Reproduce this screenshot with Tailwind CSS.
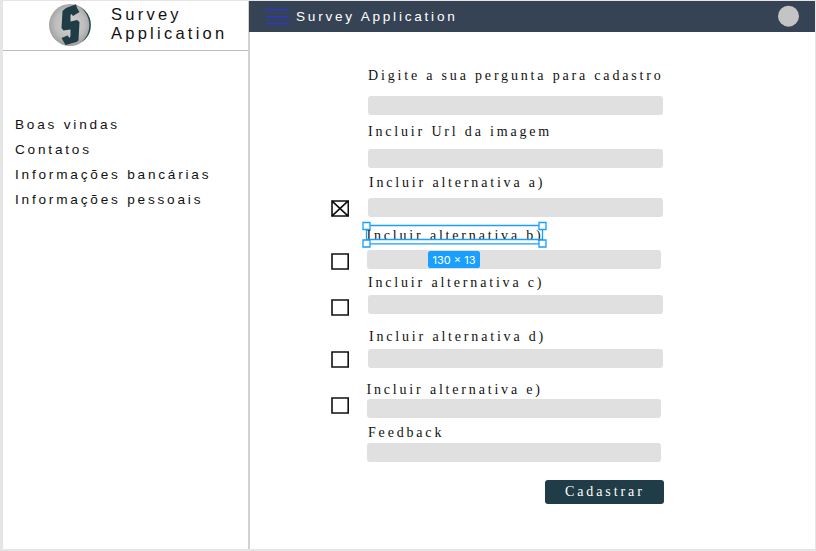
<!DOCTYPE html>
<html lang="pt-BR">
<head>
<meta charset="utf-8">
<title>Survey Application</title>
<script src="https://cdn.jsdelivr.net/npm/@tailwindcss/browser@4"></script>
</head>
<body class="w-[816px] h-[551px] overflow-hidden bg-[#e5e5e5] pl-[3px] pt-px pr-px pb-[2px] text-[#111] font-['Liberation_Sans',Arial,sans-serif]">
<div class="flex h-[548px] w-[812px] bg-white">
  <aside class="w-[247px] h-full shrink-0 border-r-2 border-[#d2d2d2]">
    <div class="flex h-[50px] border-b border-[#bdbdbd] pl-[46px] pt-[3px]">
      <svg class="w-[42px] h-[42px] shrink-0" viewBox="0 0 42 42">
        <defs><radialGradient id="disc" cx=".5" cy=".48" r=".55"><stop offset="0" stop-color="#d4d4d4"/><stop offset=".65" stop-color="#bcbcbc"/><stop offset="1" stop-color="#999"/></radialGradient></defs>
        <circle cx="21" cy="21" r="21" fill="url(#disc)"/>
        <path d="M31 3A20.5 20.5 0 0 1 32 38.5Q41 31 40.300 20Q39.500 9 31 3Z" fill="#254751"/>
        <path d="M13.500 7L17 4L27 .3L28 4L30.500 8L24 12L22.500 10L21.500 11V17.500L28 16L30.500 18L29.500 36.500L27.500 38L16.500 41L12.500 34L18.500 31.500L20.500 34L21.500 32V25.500L14.500 26.500L12.500 24Z" fill="#1f3c47"/>
      </svg>
      <h1 class="ml-[20px] mt-px text-[16.5px] leading-[19px] tracking-[3.25px]">Survey<br>Application</h1>
    </div>
    <nav class="mt-[65.5px] ml-[12px] text-[13.6px] leading-[16px] tracking-[2.8px] whitespace-nowrap">
      <div>Boas vindas</div>
      <div class="mt-[9.5px]">Contatos</div>
      <div class="mt-[8.5px]">Informações bancárias</div>
      <div class="mt-[9.5px]">Informações pessoais</div>
    </nav>
  </aside>
  <main class="w-[566px] -ml-px shrink-0">
    <header class="flex h-[30.5px] items-center bg-[#364354] pl-[17px] pr-[16px] text-white">
      <svg class="w-[23px] h-[18px] translate-y-[0.75px]" viewBox="0 0 23 18" stroke="#2b36d3" stroke-width="1.5"><path d="M0 2H23M0 9H23M0 16H23"/></svg>
      <span class="ml-[7px] pt-px text-[13.6px] leading-[16px] tracking-[2.76px]">Survey Application</span>
      <span class="ml-auto size-[21px] -translate-y-[0.3px] rounded-full bg-[#c4c4c4]"></span>
    </header>
    <form class="relative flex flex-col pt-[35.5px] pl-[82px] font-['Liberation_Serif',serif] text-[14px] leading-[18px] tracking-[2.82px] whitespace-nowrap">
      <div class="h-4 ml-[37px]">Digite a sua pergunta para cadastro</div>
      <div class="mt-[13px] ml-[37px] h-[19px] w-[294.5px] rounded-[3px] bg-[#e0e0e0]"></div>
      <div class="mt-[7.5px] h-4 ml-[37px]">Incluir Url da imagem</div>
      <div class="mt-[10.5px] ml-[37px] h-[19px] w-[294.5px] rounded-[3px] bg-[#e0e0e0]"></div>

      <div class="mt-[6px] h-4 ml-[38px]">Incluir alternativa a)</div>
      <div class="mt-[7.5px] flex h-[19px]">
        <svg class="mt-[2px] w-[18px] h-[17px]" viewBox="0 0 18 17" fill="none" stroke="#111" stroke-width="1.6"><path d="M1 1H17.3V16H1ZM.5.5L17.5 16.5M17.5.5L.5 16.5"/></svg>
        <div class="ml-[19px] w-[294.5px] rounded-[3px] bg-[#e0e0e0]"></div>
      </div>

      <div class="mt-[10.5px] mb-[2px] h-[14px] overflow-hidden ml-[35.5px]">Incluir alternativa b)</div>
      <div class="mt-[7px] flex h-[19px]">
        <svg class="mt-[2.5px] w-[18px] h-[17px] shrink-0" viewBox="0 0 18 17" fill="none" stroke="#111" stroke-width="1.6"><path d="M1 1H17.2V16H1Z"/></svg>
        <div class="ml-[17.5px] w-[294.5px] rounded-[3px] bg-[#e0e0e0]"></div>
      </div>

      <div class="mt-[5px] h-4 ml-[37px]">Incluir alternativa c)</div>
      <div class="mt-[5px] flex h-[19px]">
        <svg class="mt-[3.5px] w-[18px] h-[17px] shrink-0" viewBox="0 0 18 17" fill="none" stroke="#111" stroke-width="1.6"><path d="M1 1H17.2V16H1Z"/></svg>
        <div class="ml-[19px] w-[294.5px] rounded-[3px] bg-[#e0e0e0]"></div>
      </div>

      <div class="mt-[14px] h-4 ml-[38px]">Incluir alternativa d)</div>
      <div class="mt-[5px] flex h-[19px]">
        <svg class="mt-[2px] w-[18px] h-[17px] shrink-0" viewBox="0 0 18 17" fill="none" stroke="#111" stroke-width="1.6"><path d="M1 1H17.2V16H1Z"/></svg>
        <div class="ml-[19px] w-[294.5px] rounded-[3px] bg-[#e0e0e0]"></div>
      </div>

      <div class="mt-[13px] h-4 ml-[35.5px]">Incluir alternativa e)</div>
      <div class="mt-[2px] flex h-[19px]">
        <svg class="-mt-[2px] w-[18px] h-[17px] shrink-0" viewBox="0 0 18 17" fill="none" stroke="#111" stroke-width="1.6"><path d="M1 1H17.2V16H1Z"/></svg>
        <div class="ml-[17.5px] w-[294.5px] rounded-[3px] bg-[#e0e0e0]"></div>
      </div>

      <div class="mt-[6px] h-4 ml-[37px]">Feedback</div>
      <div class="mt-[3px] ml-[35.5px] h-[19px] w-[294.5px] rounded-[3px] bg-[#e0e0e0]"></div>
      <button type="button" class="mt-[18px] ml-[214px] flex h-[24px] w-[119px] items-center rounded-[3px] bg-[#1f3c47] pl-[20px] tracking-[2.9px] text-white">Cadastrar</button>

      <!-- selection frame with resize handles and size badge -->
      <svg class="absolute left-[112px] top-[189.5px] w-[186px] h-[27px]" viewBox="0 0 186 27" fill="none" stroke="#189fff" stroke-width="1.3">
        <path d="M5.5 4.5H181.5V22.8H5.5ZM5.5 18.5H181.5"/>
        <g fill="#fff"><path d="M2 1.5H9V8.5H2ZM178 1.5H185V8.5H178ZM2 19H9V26H2ZM178 19H185V26H178Z"/></g>
      </svg>
      <div class="absolute left-[179px] top-[219.5px] flex h-[17px] w-[52px] items-center justify-center rounded-[2.5px] bg-[#189fff] font-[Inter,sans-serif] text-[11px] tracking-[0px] text-white">130 × 13</div>
    </form>
  </main>
</div>
</body>
</html>
